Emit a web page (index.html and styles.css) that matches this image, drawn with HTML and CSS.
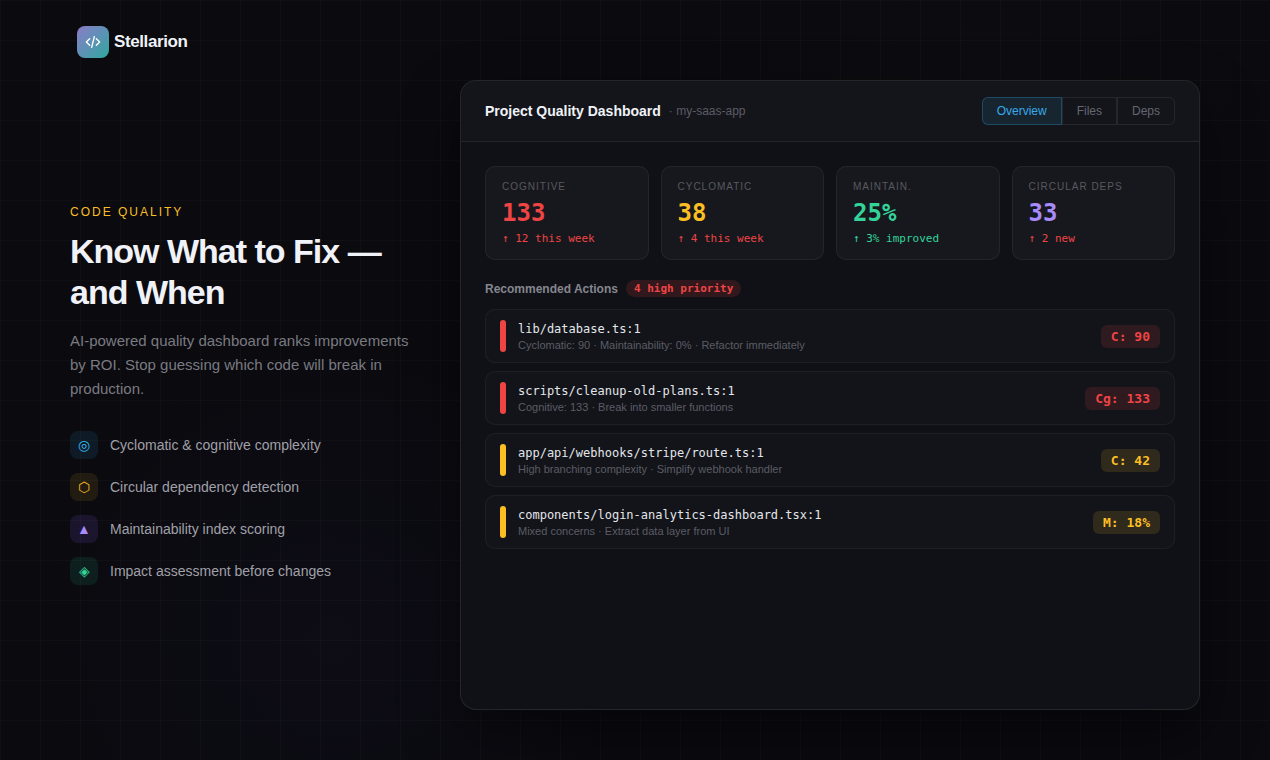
FILE: index.html
```html
<!DOCTYPE html>
<html lang="en">
<head>
    <meta charset="UTF-8">
    <meta name="viewport" content="width=device-width, initial-scale=1.0">
    <title>Stellarion - Code Quality</title>
    <link rel="stylesheet" href="styles.css">
</head>
<body>

<div class="page">
    <header class="topbar">
        <div class="logo-mark">
            <svg width="16" height="16" viewBox="0 0 24 24" fill="none" stroke="#fff" stroke-width="2" stroke-linecap="round" stroke-linejoin="round">
                <path d="M7 7l-5 5 5 5"/>
                <path d="M17 7l5 5-5 5"/>
                <path d="M14 4l-4 16"/>
            </svg>
        </div>
        <span class="logo-name">Stellarion</span>
    </header>

    <main class="hero">
        <section class="intro">
            <div class="eyebrow">CODE QUALITY</div>
            <h1>Know What to Fix — and When</h1>
            <p class="lead">AI-powered quality dashboard ranks improvements by ROI. Stop guessing which code will break in production.</p>
            <ul class="features">
                <li><span class="feature-icon blue">◎</span>Cyclomatic &amp; cognitive complexity</li>
                <li><span class="feature-icon amber">⬡</span>Circular dependency detection</li>
                <li><span class="feature-icon purple">▲</span>Maintainability index scoring</li>
                <li><span class="feature-icon green">◈</span>Impact assessment before changes</li>
            </ul>
        </section>

        <section class="dashboard">
            <div class="dash-header">
                <div class="dash-title">
                    <strong>Project Quality Dashboard</strong>
                    <span>· my-saas-app</span>
                </div>
                <div class="tabs">
                    <div class="tab active">Overview</div>
                    <div class="tab">Files</div>
                    <div class="tab">Deps</div>
                </div>
            </div>

            <div class="dash-body">
                <div class="stats">
                    <div class="stat">
                        <div class="stat-label">COGNITIVE</div>
                        <div class="stat-value red">133</div>
                        <div class="stat-delta red">↑ 12 this week</div>
                    </div>
                    <div class="stat">
                        <div class="stat-label">CYCLOMATIC</div>
                        <div class="stat-value amber">38</div>
                        <div class="stat-delta red">↑ 4 this week</div>
                    </div>
                    <div class="stat">
                        <div class="stat-label">MAINTAIN.</div>
                        <div class="stat-value green">25%</div>
                        <div class="stat-delta green">↑ 3% improved</div>
                    </div>
                    <div class="stat">
                        <div class="stat-label">CIRCULAR DEPS</div>
                        <div class="stat-value purple">33</div>
                        <div class="stat-delta red">↑ 2 new</div>
                    </div>
                </div>

                <div class="section-head">
                    <span>Recommended Actions</span>
                    <span class="pill">4 high priority</span>
                </div>

                <div class="actions">
                    <div class="action">
                        <div class="bar bar-red"></div>
                        <div class="action-text">
                            <div class="action-file">lib/database.ts:1</div>
                            <div class="action-note">Cyclomatic: 90 · Maintainability: 0% · Refactor immediately</div>
                        </div>
                        <div class="badge badge-red">C: 90</div>
                    </div>
                    <div class="action">
                        <div class="bar bar-red"></div>
                        <div class="action-text">
                            <div class="action-file">scripts/cleanup-old-plans.ts:1</div>
                            <div class="action-note">Cognitive: 133 · Break into smaller functions</div>
                        </div>
                        <div class="badge badge-red">Cg: 133</div>
                    </div>
                    <div class="action">
                        <div class="bar bar-amber"></div>
                        <div class="action-text">
                            <div class="action-file">app/api/webhooks/stripe/route.ts:1</div>
                            <div class="action-note">High branching complexity · Simplify webhook handler</div>
                        </div>
                        <div class="badge badge-amber">C: 42</div>
                    </div>
                    <div class="action">
                        <div class="bar bar-amber"></div>
                        <div class="action-text">
                            <div class="action-file">components/login-analytics-dashboard.tsx:1</div>
                            <div class="action-note">Mixed concerns · Extract data layer from UI</div>
                        </div>
                        <div class="badge badge-amber">M: 18%</div>
                    </div>
                </div>
            </div>
        </section>
    </main>
</div>

</body>
</html>
```

FILE: styles.css
```css
* {
    box-sizing: border-box;
}
html, body {
    margin: 0;
    height: 100%;
}
body {
    font-family: "Liberation Sans", Arial, sans-serif;
    background-color: #0a0a0f;
    background-image:
        linear-gradient(rgba(255, 255, 255, 0.02) 1px, transparent 1px),
        linear-gradient(90deg, rgba(255, 255, 255, 0.02) 1px, transparent 1px),
        radial-gradient(circle at 330px 640px, rgba(120, 90, 220, 0.03), transparent 300px),
        radial-gradient(circle at 1000px 60px, rgba(250, 190, 60, 0.012), transparent 350px);
    background-size: 40px 40px, 40px 40px, auto, auto;
    color: #f0f2f8;
    overflow: hidden;
}
.page {
    height: 760px;
    padding-bottom: 50px;
    display: flex;
    flex-direction: column;
}
.topbar {
    height: 80px;
    padding: 26px 0 0 77px;
    display: flex;
    align-items: flex-start;
    gap: 5px;
}
.logo-mark {
    width: 32px;
    height: 32px;
    border-radius: 8px;
    background: linear-gradient(135deg, #8b7cc8, #2fa8a0);
    display: flex;
    align-items: center;
    justify-content: center;
}
.logo-name {
    font-size: 17px;
    font-weight: 700;
    line-height: 32px;
    letter-spacing: -0.4px;
}
.hero {
    flex: 1;
    padding: 0 70px;
    display: flex;
    align-items: center;
    gap: 40px;
}
.intro {
    width: 350px;
    flex-shrink: 0;
}
.eyebrow {
    font-size: 12px;
    letter-spacing: 2px;
    color: #fbbf24;
    margin-bottom: 12px;
}
h1 {
    font-size: 34px;
    line-height: 41px;
    font-weight: 700;
    letter-spacing: -1px;
    margin: 0 0 16px;
}
.lead {
    font-size: 15px;
    line-height: 24px;
    color: #7a7a82;
    margin: 0 0 30px;
}
.features {
    list-style: none;
    margin: 0;
    padding: 0;
    display: flex;
    flex-direction: column;
    gap: 14px;
}
.features li {
    display: flex;
    align-items: center;
    gap: 12px;
    font-size: 14px;
    color: #a0a0a8;
}
.feature-icon {
    width: 28px;
    height: 28px;
    border-radius: 8px;
    display: flex;
    align-items: center;
    justify-content: center;
    font-size: 14px;
}
.feature-icon.blue {
    background: rgba(56, 189, 248, 0.1);
    color: #38bdf8;
}
.feature-icon.amber {
    background: rgba(251, 191, 36, 0.1);
    color: #fbbf24;
}
.feature-icon.purple {
    background: rgba(139, 92, 246, 0.13);
    color: #a78bfa;
}
.feature-icon.green {
    background: rgba(52, 211, 153, 0.1);
    color: #34d399;
}
.dashboard {
    width: 740px;
    height: 630px;
    background: #0f1117;
    border: 1px solid rgba(255, 255, 255, 0.09);
    border-radius: 16px;
    box-shadow: 0 24px 60px rgba(0, 0, 0, 0.4);
    overflow: hidden;
}
.dash-header {
    height: 61px;
    padding: 0 24px;
    display: flex;
    align-items: center;
    justify-content: space-between;
    background: rgba(255, 255, 255, 0.02);
    border-bottom: 1px solid rgba(255, 255, 255, 0.07);
}
.dash-title {
    display: flex;
    align-items: center;
    gap: 8px;
}
.dash-title strong {
    font-size: 14px;
}
.dash-title span {
    font-size: 12px;
    color: #5c5c64;
}
.tabs {
    display: flex;
}
.tab {
    height: 28px;
    padding: 0 14px;
    font-size: 12px;
    line-height: 26px;
    color: #666670;
    border: 1px solid rgba(255, 255, 255, 0.08);
}
.tab:first-child {
    border-radius: 6px 0 0 6px;
}
.tab:last-child {
    border-radius: 0 6px 6px 0;
}
.tab.active {
    color: #38a8e8;
    background: rgba(56, 189, 248, 0.1);
    border-color: rgba(56, 189, 248, 0.25);
}
.dash-body {
    padding: 24px;
}
.stats {
    display: grid;
    grid-template-columns: repeat(4, 1fr);
    gap: 12px;
    margin-bottom: 20px;
}
.stat {
    height: 94px;
    padding: 14px 16px;
    background: rgba(255, 255, 255, 0.03);
    border: 1px solid rgba(255, 255, 255, 0.06);
    border-radius: 10px;
}
.stat-label {
    font-size: 10px;
    line-height: 12px;
    letter-spacing: 1px;
    color: #58585f;
    margin-bottom: 6px;
}
.stat-value {
    font-family: "DejaVu Sans Mono", monospace;
    font-size: 24px;
    line-height: 29px;
    font-weight: 700;
    margin-bottom: 4px;
}
.stat-delta {
    font-family: "DejaVu Sans Mono", monospace;
    font-size: 11px;
    line-height: 14px;
}
.red {
    color: #ef4444;
}
.amber {
    color: #fbbf24;
}
.green {
    color: #34d399;
}
.purple {
    color: #a78bfa;
}
.section-head {
    display: flex;
    align-items: center;
    gap: 8px;
    margin-bottom: 12px;
    font-size: 12px;
    font-weight: 700;
    color: #86868e;
}
.pill {
    font-family: "DejaVu Sans Mono", monospace;
    font-size: 11px;
    line-height: 17px;
    padding: 0 8px;
    border-radius: 9px;
    color: #ef4444;
    background: rgba(239, 68, 68, 0.15);
}
.actions {
    display: flex;
    flex-direction: column;
    gap: 8px;
}
.action {
    height: 54px;
    padding: 0 14px;
    display: flex;
    align-items: center;
    gap: 12px;
    background: rgba(255, 255, 255, 0.015);
    border: 1px solid rgba(255, 255, 255, 0.05);
    border-radius: 10px;
}
.bar {
    width: 6px;
    height: 32px;
    border-radius: 3px;
}
.bar-red {
    background: #ef4444;
}
.bar-amber {
    background: #fbbf24;
}
.action-text {
    flex: 1;
    padding-top: 2px;
}
.action-file {
    font-family: "DejaVu Sans Mono", monospace;
    font-size: 12px;
    line-height: 15px;
    color: #e4e6ea;
    margin-bottom: 2px;
}
.action-note {
    font-size: 11px;
    line-height: 13px;
    color: #5c5c64;
}
.badge {
    font-family: "DejaVu Sans Mono", monospace;
    font-size: 13px;
    font-weight: 700;
    line-height: 23px;
    padding: 0 10px;
    border-radius: 6px;
}
.badge-red {
    color: #ef4444;
    background: rgba(239, 68, 68, 0.13);
}
.badge-amber {
    color: #fbbf24;
    background: rgba(251, 191, 36, 0.13);
}
```
